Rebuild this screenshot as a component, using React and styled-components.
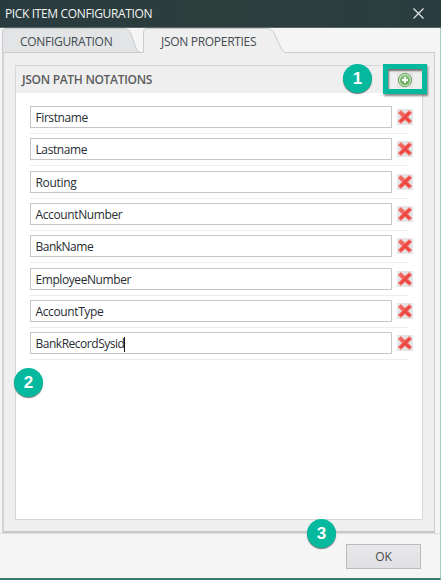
import React from "react";
import styled, { createGlobalStyle } from "styled-components";

const GlobalStyle = createGlobalStyle`
  * { box-sizing: border-box; }
  html, body { margin: 0; padding: 0; overflow: hidden; }
  body { font-family: "Open Sans", "Noto Sans", sans-serif; font-size: 12px; color: #333; }
`;

const Window = styled.div`
  position: relative;
  display: flex;
  flex-direction: column;
  width: 441px;
  height: 580px;
  background: #f5f5f5;
  border-right: 1px solid #a9cbc5;
  border-bottom: 2px solid #397e72;
`;

const TitleBar = styled.header`
  display: flex;
  align-items: center;
  justify-content: space-between;
  flex: none;
  width: 441px;
  height: 28px;
  padding: 0 17px 0 5px;
  background: linear-gradient(90deg, #283b3f, #2d3d3c 48%, #293d40);
  border-bottom: 1px solid #566564;
  color: #f2f4f4;
`;

const Label = styled.span`
  font-size: ${(p) => p.$size || 12}px;
  letter-spacing: ${(p) => p.$spacing || 0}px;
  line-height: 16px;
  white-space: pre;
`;

const TabStrip = styled.nav`
  position: relative;
  z-index: 1;
  display: flex;
  flex: none;
  height: 25px;
  margin: 0 5px -1px 2px;
`;

const Tab = styled.div`
  position: relative;
  width: ${(p) => p.$width}px;
  height: 25px;
  padding: 6px 0 0 ${(p) => p.$pad}px;
  color: #444b50;
`;

const TabShape = styled.svg`
  position: absolute;
  inset: 0;
  overflow: visible;
`;

const TabText = styled(Label)`
  position: relative;
  display: block;
`;

const TabPage = styled.main`
  flex: none;
  height: 481px;
  margin: 0 5px 0 2px;
  padding: 12px 13px 12px 12px;
  background: #efefef;
  border: 1px solid #cbcccd;
  border-left: 2px solid #d2d3d4;
  border-bottom: 2px solid #c9c9c9;
`;

const Group = styled.section`
  display: flex;
  flex-direction: column;
  width: 408px;
  height: 455px;
  margin-left: -1px;
  background: #fff;
  border: 1px solid #d7d7d8;
`;

const GroupHeader = styled.div`
  display: flex;
  flex: none;
  align-items: center;
  justify-content: space-between;
  height: 27px;
  padding: 1px 0 0 6px;
  background: #efefef;
  color: #5c5c5c;
  font-weight: 600;
`;

const Callout = styled.div`
  display: flex;
  align-items: center;
  justify-content: center;
  width: 44px;
  height: 30px;
  margin: -3px -5px 0 0;
  border: 5px solid #05b99e;
  box-shadow: 1px 2px 2px #0007, inset 1px 2px 2px #0008;
`;

const AddButton = styled.button`
  display: flex;
  width: 16px;
  height: 16px;
  margin-top: 2px;
  padding: 0;
  border: 0;
  background: #e4e4e4;
`;

const List = styled.div`
  display: flex;
  flex-direction: column;
  padding: 13px 0 0 14px;
`;

const Row = styled.div`
  display: flex;
  align-items: flex-start;
  width: 378px;
  height: ${(p) => p.$height}px;
`;

const Field = styled.div`
  display: flex;
  align-items: center;
  flex: none;
  width: 362px;
  height: 22px;
  padding: 2px 0 0 4.5px;
  border: 1px solid #c5c6c9;
  background: #fff;
  color: #282d33;
`;

const Caret = styled.i`
  width: 1px;
  height: 15px;
  background: #111;
`;

const RemoveButton = styled.button`
  display: flex;
  flex: none;
  width: 16px;
  height: 16px;
  margin: 3px 0 0 5px;
  padding: 0;
  border: 0;
  background: #e5e5e7;
`;

const Rule = styled.div`
  flex: none;
  width: 378px;
  height: 1px;
  margin: ${(p) => `${27 - p.$height}px 0 ${p.$height - 28}px`};
  background: #ededee;
`;

const Footer = styled.footer`
  display: flex;
  justify-content: flex-end;
  flex: 1;
  padding: 10px 19px 0 0;
  border-top: 1px solid #dedede;
`;

const OkButton = styled.button`
  width: 75px;
  height: 25px;
  padding: 0;
  border: 1px solid #bbbbbe;
  background: linear-gradient(#e8e8ea, #e1e1e3);
  color: #4a4a4d;
  font: 12px/22px "Open Sans", sans-serif;
`;

const Marker = styled.div`
  position: absolute;
  left: ${(p) => p.$x}px;
  top: ${(p) => p.$y}px;
  z-index: 2;
  display: flex;
  align-items: center;
  justify-content: center;
  width: 29px;
  height: 29px;
  border-radius: 50%;
  background: #05b99e;
  box-shadow: 0 1px 1px #0008;
  color: #fff;
  font: bold 17px/29px "Liberation Sans", sans-serif;
`;

const FIELDS = [
  { name: "Firstname", gap: 32, spacing: -0.42 },
  { name: "Lastname", gap: 33, spacing: -0.4 },
  { name: "Routing", gap: 32, spacing: -0.3 },
  { name: "AccountNumber", gap: 32, spacing: -0.38 },
  { name: "BankName", gap: 33, spacing: -0.5 },
  { name: "EmployeeNumber", gap: 32, spacing: -0.42 },
  { name: "AccountType", gap: 32, spacing: -0.38 },
  { name: "BankRecordSysid", gap: 32, spacing: -0.48, focused: true },
];

const CloseIcon = () => (
  <svg width="11" height="11" viewBox="0 0 11 11">
    <path d="M.5.5l10 10M10.500.5L.5 10.500" stroke="#e2e6e6" strokeWidth="1.2" />
  </svg>
);

const AddIcon = () => (
  <svg width="16" height="16" viewBox="0 0 16 16">
    <defs>
      <linearGradient id="green" x2="0" y2="1">
        <stop stopColor="#91c887" />
        <stop offset="1" stopColor="#62a955" />
      </linearGradient>
    </defs>
    <circle cx="8" cy="8" r="6.6" fill="#c9e3c0" stroke="#68a65d" />
    <circle cx="8" cy="8" r="5.1" fill="url(#green)" />
    <path d="M8 5v6M5 8h6" stroke="#fff" strokeWidth="2" />
  </svg>
);

const RemoveIcon = () => (
  <svg width="16" height="16" viewBox="0 0 16 16">
    <path
      d="M3.800 1.400L8 5.200l4.300-3.800 2.500 2.500L10.800 8l4 4.100-2.500 2.500L8 10.800l-4.200 3.800-2.600-2.500L5.200 8l-4-4.100z"
      fill="#f2615b"
      stroke="#f28680"
      strokeWidth=".8"
      strokeLinejoin="round"
    />
    <path d="M3.500 12.500L12.500 3.500M8 8l4.600 4.600" stroke="#e9443e" strokeWidth="2" />
  </svg>
);

export default function App() {
  return (
    <>
      <GlobalStyle />
      <Window>
        <TitleBar>
          <Label $spacing={-0.36}>PICK ITEM CONFIGURATION</Label>
          <CloseIcon />
        </TitleBar>
        <TabStrip>
          <Tab $width={141} $pad={18}>
            <TabShape width="141" height="25">
              <path d="M.5 24.5V4Q.5.5 4 .5H122Q127 .5 129 6L134 20Q135.5 24.5 140 24.5Z" fill="#e2e4e6" stroke="#c9cbce" />
            </TabShape>
            <TabText $spacing={-0.3}>CONFIGURATION</TabText>
          </Tab>
          <Tab $width={145} $pad={18}>
            <TabShape width="145" height="25">
              <path d="M.5 25V4Q.5.5 4 .5H124Q129 .5 131.500 6L138 20Q140 24.500 143 24.500V25Z" fill="#efefef" />
              <path d="M.5 24.5V4Q.5.5 4 .5H124Q129 .5 131.500 6L138 20Q140 24.500 143 24.500" fill="none" stroke="#c9cbce" />
            </TabShape>
            <TabText $spacing={-0.3}>JSON PROPERTIES</TabText>
          </Tab>
        </TabStrip>
        <TabPage>
          <Group>
            <GroupHeader>
              <Label $spacing={-0.3}>JSON PATH NOTATIONS</Label>
              <Callout>
                <AddButton aria-label="Add"><AddIcon /></AddButton>
              </Callout>
            </GroupHeader>
            <List>
              {FIELDS.map((f) => (
                <React.Fragment key={f.name}>
                  <Row $height={f.gap}>
                    <Field>
                      <Label $spacing={f.spacing}>{f.name}</Label>
                      {f.focused && <Caret />}
                    </Field>
                    <RemoveButton aria-label="Remove"><RemoveIcon /></RemoveButton>
                  </Row>
                  <Rule $height={f.gap} />
                </React.Fragment>
              ))}
            </List>
          </Group>
        </TabPage>
        <Footer>
          <OkButton>OK</OkButton>
        </Footer>
        <Marker $x={343} $y={64}>1</Marker>
        <Marker $x={14} $y={368}>2</Marker>
        <Marker $x={307} $y={519}>3</Marker>
      </Window>
    </>
  );
}
